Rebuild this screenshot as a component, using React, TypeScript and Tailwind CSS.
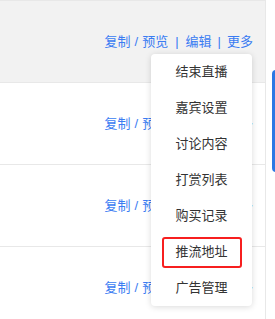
import React from "react";

const menuItems = ["结束直播", "嘉宾设置", "讨论内容", "打赏列表", "购买记录", "推流地址", "广告管理"];

const Actions = () => (
  <div className="flex items-center text-[13px] text-[#3a7cf2] leading-none whitespace-nowrap">
    <span>复制</span>
    <span className="mx-[4px]">/</span>
    <span>预览</span>
    <span className="mx-[7px]">|</span>
    <span>编辑</span>
    <span className="mx-[6px]">|</span>
    <span>更多</span>
  </div>
);

const App = () => {
  const rows = [true, false, false, false];

  return (
    <div
      className="relative w-[275px] h-[319px] bg-white overflow-hidden"
      style={{ fontFamily: '"Liberation Sans", "Noto Sans CJK SC", sans-serif' }}
    >
      <div className="w-[266px] border-t border-r border-[#e8e8e8]">
        {rows.map((active, i) => (
          <div
            key={i}
            className={`h-[82px] border-b border-[#e8e8e8] flex items-center justify-end pr-[12px] ${
              active ? "bg-[#f2f2f2]" : "bg-white"
            }`}
          >
            <Actions />
          </div>
        ))}
      </div>

      {/* dropdown menu */}
      <div className="absolute left-[151px] top-[54px] w-[101px] bg-white rounded-[4px] shadow-[0_1px_6px_rgba(0,0,0,0.15)] z-10">
        {menuItems.map((item) => (
          <div
            key={item}
            className="relative h-[36px] flex items-center justify-center text-[13px] text-[#333]"
          >
            {item}
            {item === "推流地址" && (
              <div className="absolute left-[11px] top-[3px] w-[80px] h-[31px] border-2 border-[#f71f1f] rounded-[3px]" />
            )}
          </div>
        ))}
      </div>

      {/* side button peeking in */}
      <div className="absolute left-[272px] top-[70px] w-[20px] h-[102px] bg-[#2b78e4] rounded-[4px]" />
    </div>
  );
};

export default App;
